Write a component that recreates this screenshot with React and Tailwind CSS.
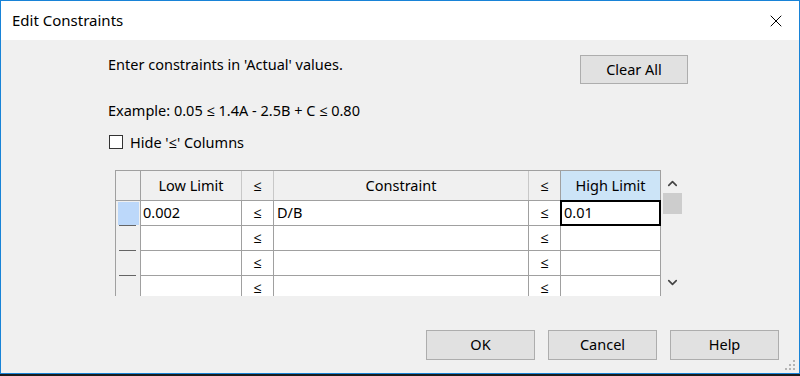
import { X, ChevronUp, ChevronDown } from 'lucide-react';

const font = { fontFamily: '"Noto Sans", "Open Sans", sans-serif' };

const rows = [
  { low: '0.002', c: 'D/B', high: '0.01', sel: true },
  { low: '', c: '', high: '' },
  { low: '', c: '', high: '' },
  { low: '', c: '', high: '' },
];

const Btn = ({ children, w = 'w-[109px]', h = 'h-[30px]' }) => (
  <button className={`${w} ${h} bg-[#e1e1e1] border border-[#adadad] text-[14.5px] text-black`}>
    {children}
  </button>
);

export default function App() {
  return (
    <div className="w-[800px] h-[376px] bg-[#1b1b1b] pb-[2px] overflow-hidden" style={font}>
      <div className="w-full h-full border border-[#1883d7] flex flex-col bg-[#f0f0f0]">
        {/* title bar */}
        <div className="h-[39px] bg-white flex items-center justify-between pl-[11px] pr-[13px] shrink-0">
          <span className="text-[15px] text-black">Edit Constraints</span>
          <X size={20} strokeWidth={1.2} className="text-black" />
        </div>

        <div className="flex-1 flex flex-col pl-[107px] relative">
          <div className="flex items-start mt-[15px] h-[29px]">
            <span className="text-[14.5px] leading-[18px] w-[472px]">Enter constraints in 'Actual' values.</span>
            <Btn w="w-[108px]" h="h-[29px]">Clear All</Btn>
          </div>
          <div className="text-[14.5px] mt-[17px] leading-[18px]">Example: 0.05 ≤ 1.4A - 2.5B + C ≤ 0.80</div>
          <label className="flex items-center gap-[7px] mt-[14px] ml-[1px] text-[14.5px] leading-[18px]">
            <span className="w-[14px] h-[14px] border border-[#333] bg-white" />
            Hide '≤' Columns
          </label>

          {/* grid */}
          <div className="flex mt-[19px] ml-[7px] h-[126px] overflow-hidden">
            <div className="border-l border-t border-[#a0a0a0] bg-white text-[14.5px]">
              {/* header */}
              <div className="flex h-[30px] bg-[#f0f0f0] border-b border-[#a0a0a0]">
                <div className="w-[25px] border-r border-[#a0a0a0]" />
                <div className="w-[101px] flex items-center justify-center border-r border-[#c8c8c8]">Low Limit</div>
                <div className="w-[32px] flex items-center justify-center border-r border-[#c8c8c8]">≤</div>
                <div className="w-[255px] flex items-center justify-center border-r border-[#c8c8c8]">Constraint</div>
                <div className="w-[32px] flex items-center justify-center border-r border-[#a0a0a0]">≤</div>
                <div className="w-[100px] flex items-center justify-center bg-[#cce4f7] border-r border-[#a0a0a0]">High Limit</div>
              </div>
              {rows.map((r, i) => (
                <div key={i} className="flex h-[25px]">
                  <div className="w-[25px] bg-[#f0f0f0] border-r border-[#a0a0a0] relative">
                    {r.sel && <div className="absolute left-[2px] top-[1px] w-[21px] h-[23px] bg-[#bcd8fa]" />}
                    <div className="absolute left-[3px] bottom-0 w-[17px] h-[1px] bg-[#646464]" />
                  </div>
                  <div className="w-[101px] border-r border-b border-[#a0a0a0] pl-[2px] flex items-center">{r.low}</div>
                  <div className="w-[32px] border-r border-b border-[#a0a0a0] flex items-center justify-center">≤</div>
                  <div className="w-[255px] border-r border-b border-[#a0a0a0] pl-[3px] flex items-center">{r.c}</div>
                  <div className="w-[32px] border-r border-b border-[#a0a0a0] flex items-center justify-center">≤</div>
                  <div className="w-[100px] border-r border-b border-[#a0a0a0] relative flex items-center pl-[3px]">
                    {r.sel && <div className="absolute -left-[1px] -top-[1px] w-[101px] h-[26px] border-2 border-black" />}
                    {r.high}
                  </div>
                </div>
              ))}
            </div>
            {/* scrollbar */}
            <div className="w-[21px] flex flex-col items-center">
              <ChevronUp size={15} strokeWidth={2.6} className="mt-[6px] ml-[2px] text-[#444]" />
              <div className="w-[19px] h-[21px] bg-[#cdcdcd] mt-[2px] ml-[2px]" />
              <div className="flex-1" />
              <ChevronDown size={15} strokeWidth={2.6} className="mb-[6px] ml-[2px] text-[#444]" />
            </div>
          </div>

          <div className="flex justify-end gap-[13px] pr-[20px] mt-auto mb-[13px]">
            <Btn>OK</Btn>
            <Btn>Cancel</Btn>
            <Btn>Help</Btn>
          </div>

          {/* resize grip */}
          <svg className="absolute right-[3px] bottom-[2px]" width="12" height="12" viewBox="0 0 12 12">
            {[[9, 1], [9, 5], [5, 5], [9, 9], [5, 9], [1, 9]].map(([x, y], i) => (
              <rect key={i} x={x} y={y} width="2" height="2" fill="#b4b4b4" />
            ))}
          </svg>
        </div>
      </div>
    </div>
  );
}
